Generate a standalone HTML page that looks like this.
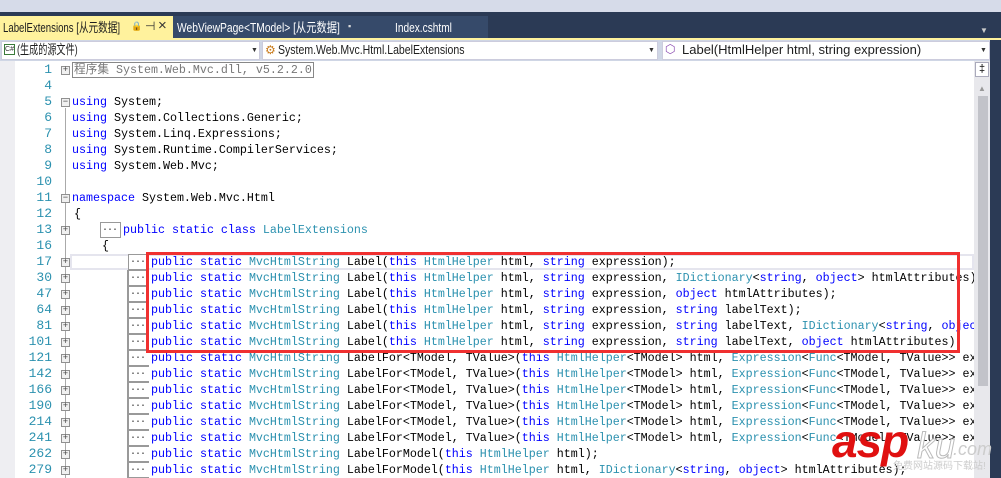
<!DOCTYPE html>
<html><head><meta charset="utf-8"><style>
*{margin:0;padding:0;box-sizing:border-box}
body{width:1001px;height:478px;overflow:hidden;background:#fff;position:relative;font-family:"Liberation Sans","Noto Sans CJK SC",sans-serif}
.abs{position:absolute}
.sx{transform-origin:0 0;white-space:nowrap;line-height:16px}
.row{position:absolute;left:0;height:16px;width:1001px}
.ln{position:absolute;right:949px;width:40px;text-align:right;color:#2b91af;font:13px/16px "Liberation Mono","Noto Sans CJK SC",monospace;top:0}
.code{position:absolute;top:0;white-space:pre;font:11.67px/16px "Liberation Mono","Noto Sans CJK SC",monospace;color:#000}
.k{color:#0000ff}.t{color:#2b91af}
.pb{position:absolute;left:61px;top:4px;width:9px;height:9px;border:1px solid #909090;background:#f0f0f0;font:9px/7px "Liberation Mono",monospace;text-align:center;color:#444}
.dots{position:absolute;top:0;width:21px;height:16px;border:1px solid #999;border-right:none;font:10px/11px "Liberation Mono",monospace;color:#333;padding-left:1px;letter-spacing:-1px;background:#fff}
</style></head><body>
<div class="abs" style="left:0;top:0;width:1001px;height:12px;background:#d6dbe9"></div>
<div class="abs" style="left:0;top:12px;width:1001px;height:28px;background:#2b3a55"></div>
<div class="abs" style="left:0;top:16px;width:173px;height:22px;background:#fff29d"></div>
<div class="abs sx" style="left:3px;top:20px;font-size:13px;color:#1e1e1e;transform:scaleX(0.74)">LabelExtensions [从元数据]</div>
<div class="abs" style="left:131px;top:21px;font-size:9px;color:#333">🔒</div>
<div class="abs" style="left:145px;top:19px;font-size:12px;color:#333">⊣</div>
<div class="abs" style="left:158px;top:17px;font-size:15px;color:#333">×</div>
<div class="abs" style="left:173px;top:16px;width:315px;height:22px;background:#364a6a"></div>
<div class="abs sx" style="left:177px;top:20px;font-size:13px;color:#fff;transform:scaleX(0.79)">WebViewPage&lt;TModel&gt; [从元数据]</div>
<div class="abs" style="left:348px;top:21px;font-size:9px;color:#ddd">▪</div>
<div class="abs sx" style="left:395px;top:20px;font-size:13px;color:#fff;transform:scaleX(0.78)">Index.cshtml</div>
<div class="abs" style="left:980px;top:26px;font-size:8px;color:#ccc">▼</div>
<div class="abs" style="left:0;top:38px;width:1001px;height:2px;background:#fff29d"></div>
<div class="abs" style="left:0;top:40px;width:1001px;height:21px;background:#cfd6e5"></div>
<div class="abs" style="left:1px;top:41px;width:259px;height:19px;background:#fff;border:1px solid #ccd"></div>
<div class="abs" style="left:4px;top:44px;width:11px;height:11px;border:1px solid #3a7a3a;font:7px/9px sans-serif;color:#333;text-align:center">C#</div>
<div class="abs sx" style="left:17px;top:42px;font-size:13px;color:#1e1e1e;transform:scaleX(0.7)">(生成的源文件)</div>
<div class="abs" style="left:251px;top:47px;font-size:7px;color:#333">▼</div>
<div class="abs" style="left:262px;top:41px;width:396px;height:19px;background:#fff;border:1px solid #ccd"></div>
<div class="abs" style="left:265px;top:43px;font-size:12px;color:#c87a1a">⚙</div>
<div class="abs sx" style="left:278px;top:42px;font-size:13px;color:#1e1e1e;transform:scaleX(0.81)">System.Web.Mvc.Html.LabelExtensions</div>
<div class="abs" style="left:648px;top:47px;font-size:7px;color:#333">▼</div>
<div class="abs" style="left:662px;top:41px;width:328px;height:19px;background:#fff;border:1px solid #ccd"></div>
<div class="abs" style="left:665px;top:42px;font-size:12px;color:#8a4ab0">⬡</div>
<div class="abs sx" style="left:682px;top:42px;font-size:13px;color:#1e1e1e">Label(HtmlHelper html, string expression)</div>
<div class="abs" style="left:980px;top:47px;font-size:7px;color:#333">▼</div>
<div class="abs" style="left:990px;top:40px;width:11px;height:438px;background:#2b3a55"></div>
<div class="abs" style="left:0;top:61px;width:15px;height:417px;background:#eeeef2"></div>
<div class="abs" style="left:65px;top:108px;width:1px;height:370px;background:#aaa"></div>
<div class="abs" style="left:70px;top:254px;width:904px;height:16px;border:2px solid #e5e5ee"></div>
<div class="abs" style="left:127px;top:270px;width:1px;height:208px;background:#999"></div>

<div class="row" style="top:62px"><span class="ln">1</span><span class="pb">+</span><span class="code" style="left:72px;color:#777;border:1px solid #888;padding:0 1px;line-height:14px">程序集 System.Web.Mvc.dll, v5.2.2.0</span></div>
<div class="row" style="top:78px"><span class="ln">4</span></div>
<div class="row" style="top:94px"><span class="ln">5</span><span class="pb">−</span><span class="code" style="left:72px"><span class="k">using</span> System;</span></div>
<div class="row" style="top:110px"><span class="ln">6</span><span class="code" style="left:72px"><span class="k">using</span> System.Collections.Generic;</span></div>
<div class="row" style="top:126px"><span class="ln">7</span><span class="code" style="left:72px"><span class="k">using</span> System.Linq.Expressions;</span></div>
<div class="row" style="top:142px"><span class="ln">8</span><span class="code" style="left:72px"><span class="k">using</span> System.Runtime.CompilerServices;</span></div>
<div class="row" style="top:158px"><span class="ln">9</span><span class="code" style="left:72px"><span class="k">using</span> System.Web.Mvc;</span></div>
<div class="row" style="top:174px"><span class="ln">10</span></div>
<div class="row" style="top:190px"><span class="ln">11</span><span class="pb">−</span><span class="code" style="left:72px"><span class="k">namespace</span> System.Web.Mvc.Html</span></div>
<div class="row" style="top:206px"><span class="ln">12</span><span class="code" style="left:74px">{</span></div>
<div class="row" style="top:222px"><span class="ln">13</span><span class="pb">+</span><span class="dots" style="left:100px;border-right:1px solid #999">...</span><span class="code" style="left:123px"><span class="k">public static class</span> <span class="t">LabelExtensions</span></span></div>
<div class="row" style="top:238px"><span class="ln">16</span><span class="code" style="left:102px">{</span></div>

<div class="row" style="top:254px"><span class="ln">17</span><span class="pb">+</span><span class="dots" style="left:128px">...</span><span class="code" style="left:151px"><span class="k">public static</span> <span class="t">MvcHtmlString</span> Label(<span class="k">this</span> <span class="t">HtmlHelper</span> html, <span class="k">string</span> expression);</span></div>
<div class="row" style="top:270px"><span class="ln">30</span><span class="pb">+</span><span class="dots" style="left:128px">...</span><span class="code" style="left:151px"><span class="k">public static</span> <span class="t">MvcHtmlString</span> Label(<span class="k">this</span> <span class="t">HtmlHelper</span> html, <span class="k">string</span> expression, <span class="t">IDictionary</span>&lt;<span class="k">string</span>, <span class="k">object</span>&gt; htmlAttributes);</span></div>
<div class="row" style="top:286px"><span class="ln">47</span><span class="pb">+</span><span class="dots" style="left:128px">...</span><span class="code" style="left:151px"><span class="k">public static</span> <span class="t">MvcHtmlString</span> Label(<span class="k">this</span> <span class="t">HtmlHelper</span> html, <span class="k">string</span> expression, <span class="k">object</span> htmlAttributes);</span></div>
<div class="row" style="top:302px"><span class="ln">64</span><span class="pb">+</span><span class="dots" style="left:128px">...</span><span class="code" style="left:151px"><span class="k">public static</span> <span class="t">MvcHtmlString</span> Label(<span class="k">this</span> <span class="t">HtmlHelper</span> html, <span class="k">string</span> expression, <span class="k">string</span> labelText);</span></div>
<div class="row" style="top:318px"><span class="ln">81</span><span class="pb">+</span><span class="dots" style="left:128px">...</span><span class="code" style="left:151px"><span class="k">public static</span> <span class="t">MvcHtmlString</span> Label(<span class="k">this</span> <span class="t">HtmlHelper</span> html, <span class="k">string</span> expression, <span class="k">string</span> labelText, <span class="t">IDictionary</span>&lt;<span class="k">string</span>, <span class="k">object</span>&gt;</span></div>
<div class="row" style="top:334px"><span class="ln">101</span><span class="pb">+</span><span class="dots" style="left:128px">...</span><span class="code" style="left:151px"><span class="k">public static</span> <span class="t">MvcHtmlString</span> Label(<span class="k">this</span> <span class="t">HtmlHelper</span> html, <span class="k">string</span> expression, <span class="k">string</span> labelText, <span class="k">object</span> htmlAttributes);</span></div>
<div class="row" style="top:350px"><span class="ln">121</span><span class="pb">+</span><span class="dots" style="left:128px">...</span><span class="code" style="left:151px"><span class="k">public static</span> <span class="t">MvcHtmlString</span> LabelFor&lt;TModel, TValue&gt;(<span class="k">this</span> <span class="t">HtmlHelper</span>&lt;TModel&gt; html, <span class="t">Expression</span>&lt;<span class="t">Func</span>&lt;TModel, TValue&gt;&gt; ex</span></div>
<div class="row" style="top:366px"><span class="ln">142</span><span class="pb">+</span><span class="dots" style="left:128px">...</span><span class="code" style="left:151px"><span class="k">public static</span> <span class="t">MvcHtmlString</span> LabelFor&lt;TModel, TValue&gt;(<span class="k">this</span> <span class="t">HtmlHelper</span>&lt;TModel&gt; html, <span class="t">Expression</span>&lt;<span class="t">Func</span>&lt;TModel, TValue&gt;&gt; ex</span></div>
<div class="row" style="top:382px"><span class="ln">166</span><span class="pb">+</span><span class="dots" style="left:128px">...</span><span class="code" style="left:151px"><span class="k">public static</span> <span class="t">MvcHtmlString</span> LabelFor&lt;TModel, TValue&gt;(<span class="k">this</span> <span class="t">HtmlHelper</span>&lt;TModel&gt; html, <span class="t">Expression</span>&lt;<span class="t">Func</span>&lt;TModel, TValue&gt;&gt; ex</span></div>
<div class="row" style="top:398px"><span class="ln">190</span><span class="pb">+</span><span class="dots" style="left:128px">...</span><span class="code" style="left:151px"><span class="k">public static</span> <span class="t">MvcHtmlString</span> LabelFor&lt;TModel, TValue&gt;(<span class="k">this</span> <span class="t">HtmlHelper</span>&lt;TModel&gt; html, <span class="t">Expression</span>&lt;<span class="t">Func</span>&lt;TModel, TValue&gt;&gt; ex</span></div>
<div class="row" style="top:414px"><span class="ln">214</span><span class="pb">+</span><span class="dots" style="left:128px">...</span><span class="code" style="left:151px"><span class="k">public static</span> <span class="t">MvcHtmlString</span> LabelFor&lt;TModel, TValue&gt;(<span class="k">this</span> <span class="t">HtmlHelper</span>&lt;TModel&gt; html, <span class="t">Expression</span>&lt;<span class="t">Func</span>&lt;TModel, TValue&gt;&gt; ex</span></div>
<div class="row" style="top:430px"><span class="ln">241</span><span class="pb">+</span><span class="dots" style="left:128px">...</span><span class="code" style="left:151px"><span class="k">public static</span> <span class="t">MvcHtmlString</span> LabelFor&lt;TModel, TValue&gt;(<span class="k">this</span> <span class="t">HtmlHelper</span>&lt;TModel&gt; html, <span class="t">Expression</span>&lt;<span class="t">Func</span>&lt;TModel, TValue&gt;&gt; ex</span></div>
<div class="row" style="top:446px"><span class="ln">262</span><span class="pb">+</span><span class="dots" style="left:128px">...</span><span class="code" style="left:151px"><span class="k">public static</span> <span class="t">MvcHtmlString</span> LabelForModel(<span class="k">this</span> <span class="t">HtmlHelper</span> html);</span></div>
<div class="row" style="top:462px"><span class="ln">279</span><span class="pb">+</span><span class="dots" style="left:128px">...</span><span class="code" style="left:151px"><span class="k">public static</span> <span class="t">MvcHtmlString</span> LabelForModel(<span class="k">this</span> <span class="t">HtmlHelper</span> html, <span class="t">IDictionary</span>&lt;<span class="k">string</span>, <span class="k">object</span>&gt; htmlAttributes);</span></div>
<div class="abs" style="left:974px;top:61px;width:16px;height:417px;background:#e8e8ec;z-index:1"></div>
<div class="abs" style="left:975px;top:62px;width:14px;height:15px;background:#fff;border:1px solid #aab;font:11px/12px sans-serif;text-align:center;z-index:2">‡</div>
<div class="abs" style="left:978px;top:84px;font-size:8px;color:#999;z-index:2">▲</div>
<div class="abs" style="left:978px;top:96px;width:10px;height:290px;background:#c2c3c9;z-index:2"></div>
<div class="abs" style="left:146px;top:252px;width:814px;height:101px;border:3px solid #f03030;z-index:3"></div>
<div class="abs" style="left:832px;top:418px;font:italic bold 46px/46px 'Liberation Sans',sans-serif;color:#e01010;z-index:4;letter-spacing:-1px">asp</div>
<div class="abs" style="left:917px;top:428px;font:italic 36px/36px 'Liberation Sans',sans-serif;color:#fff;-webkit-text-stroke:1px #bbb;z-index:4">ku</div>
<div class="abs" style="left:953px;top:440px;font:italic 18px/18px 'Liberation Sans',sans-serif;color:#ccc;z-index:4">.com</div>
<div class="abs" style="left:893px;top:461px;font:10px/12px 'Liberation Sans','Noto Sans CJK SC',sans-serif;color:#ccc;z-index:4">免费网站源码下载站!</div>
</body></html>
